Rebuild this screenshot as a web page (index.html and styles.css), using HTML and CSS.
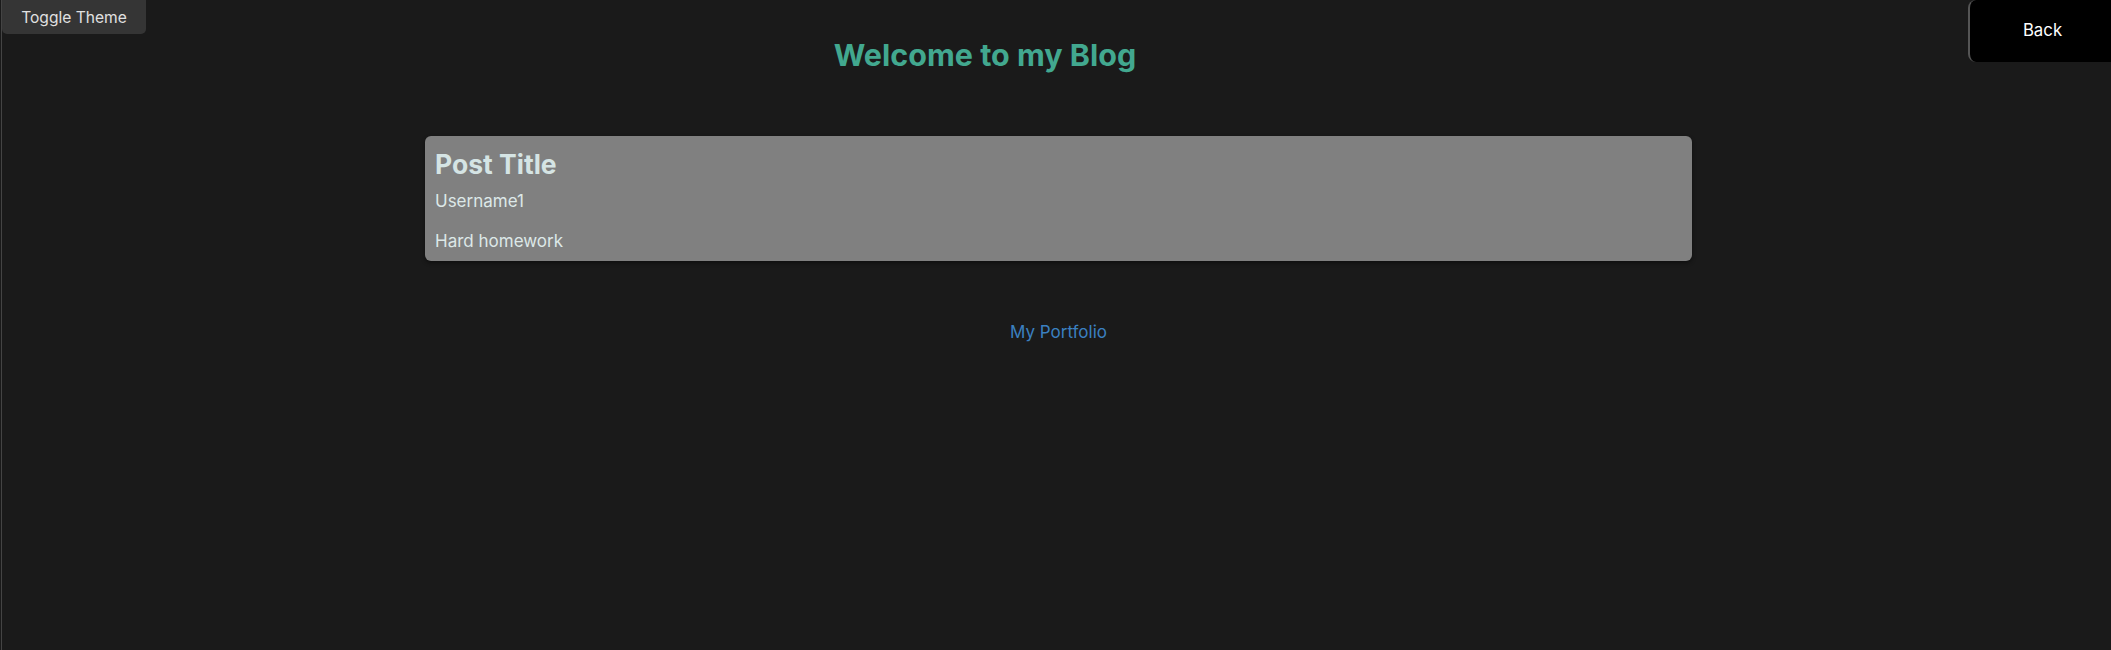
FILE: index.html
```html
<!DOCTYPE html>
<html lang="en">
<head>
<meta charset="utf-8">
<title>Blog</title>
<link rel="stylesheet" href="styles.css">
</head>
<body>
<div class="page">
  <button class="toggle-theme">Toggle Theme</button>
  <header class="header">
    <h1 class="title">Welcome to my Blog</h1>
    <button class="back-btn">Back</button>
  </header>
  <main class="posts">
    <article class="post-card">
      <h2 class="post-title">Post Title</h2>
      <p class="post-user">Username1</p>
      <p class="post-body">Hard homework</p>
    </article>
  </main>
  <footer class="footer">
    <a class="portfolio-link" href="#">My Portfolio</a>
  </footer>
</div>
</body>
</html>
```

FILE: styles.css
```css
html, body {
  margin: 0;
  padding: 0;
  background: #1a1a1a;
  height: 100%;
}

body {
  font-family: Inter, "Noto Sans", "Liberation Sans", sans-serif;
  color: #dde8e8;
}

.page {
  position: relative;
  margin-left: 1px;
  border-left: 1px solid #444;
  min-height: 100%;
  box-sizing: border-box;
}

.toggle-theme {
  position: absolute;
  top: 0;
  left: 0;
  width: 144px;
  height: 34px;
  background: #353535;
  color: #e0e0e0;
  border: none;
  border-radius: 0 0 5px 5px;
  font-family: inherit;
  font-size: 15.6px;
  padding: 0;
  cursor: pointer;
}

.header {
  display: flex;
  align-items: flex-start;
}

.title {
  flex: 1;
  margin: 35px 0 0;
  text-align: center;
  font-size: 30.5px;
  line-height: 40px;
  font-weight: 700;
  color: #42a88f;
}

.back-btn {
  width: 143px;
  height: 62px;
  background: #000;
  color: #fff;
  border: none;
  border-left: 2px solid #555;
  border-radius: 8px 0 0 8px;
  font-family: inherit;
  font-size: 16.8px;
  padding: 0 0 3px 4px;
  cursor: pointer;
}

.posts {
  display: flex;
  justify-content: center;
  padding-left: 4px;
  margin-top: 61px;
}

.post-card {
  width: 1267px;
  box-sizing: border-box;
  background: #808080;
  border-radius: 6px;
  box-shadow: 0 2px 4px rgba(0, 0, 0, 0.45);
  padding: 12px 10px 8px;
}

.post-title {
  margin: 0;
  font-size: 26.5px;
  line-height: 32px;
  font-weight: 700;
  color: #d5e4e4;
}

.post-user,
.post-body {
  margin: 9px 0 0;
  font-size: 17px;
  line-height: 24px;
  color: #dde8e8;
}

.post-body {
  margin-top: 16px;
}

.footer {
  display: flex;
  justify-content: center;
  padding-left: 4px;
  margin-top: 59px;
}

.portfolio-link {
  font-size: 17px;
  line-height: 24px;
  color: #3b80c0;
  text-decoration: none;
}
```
